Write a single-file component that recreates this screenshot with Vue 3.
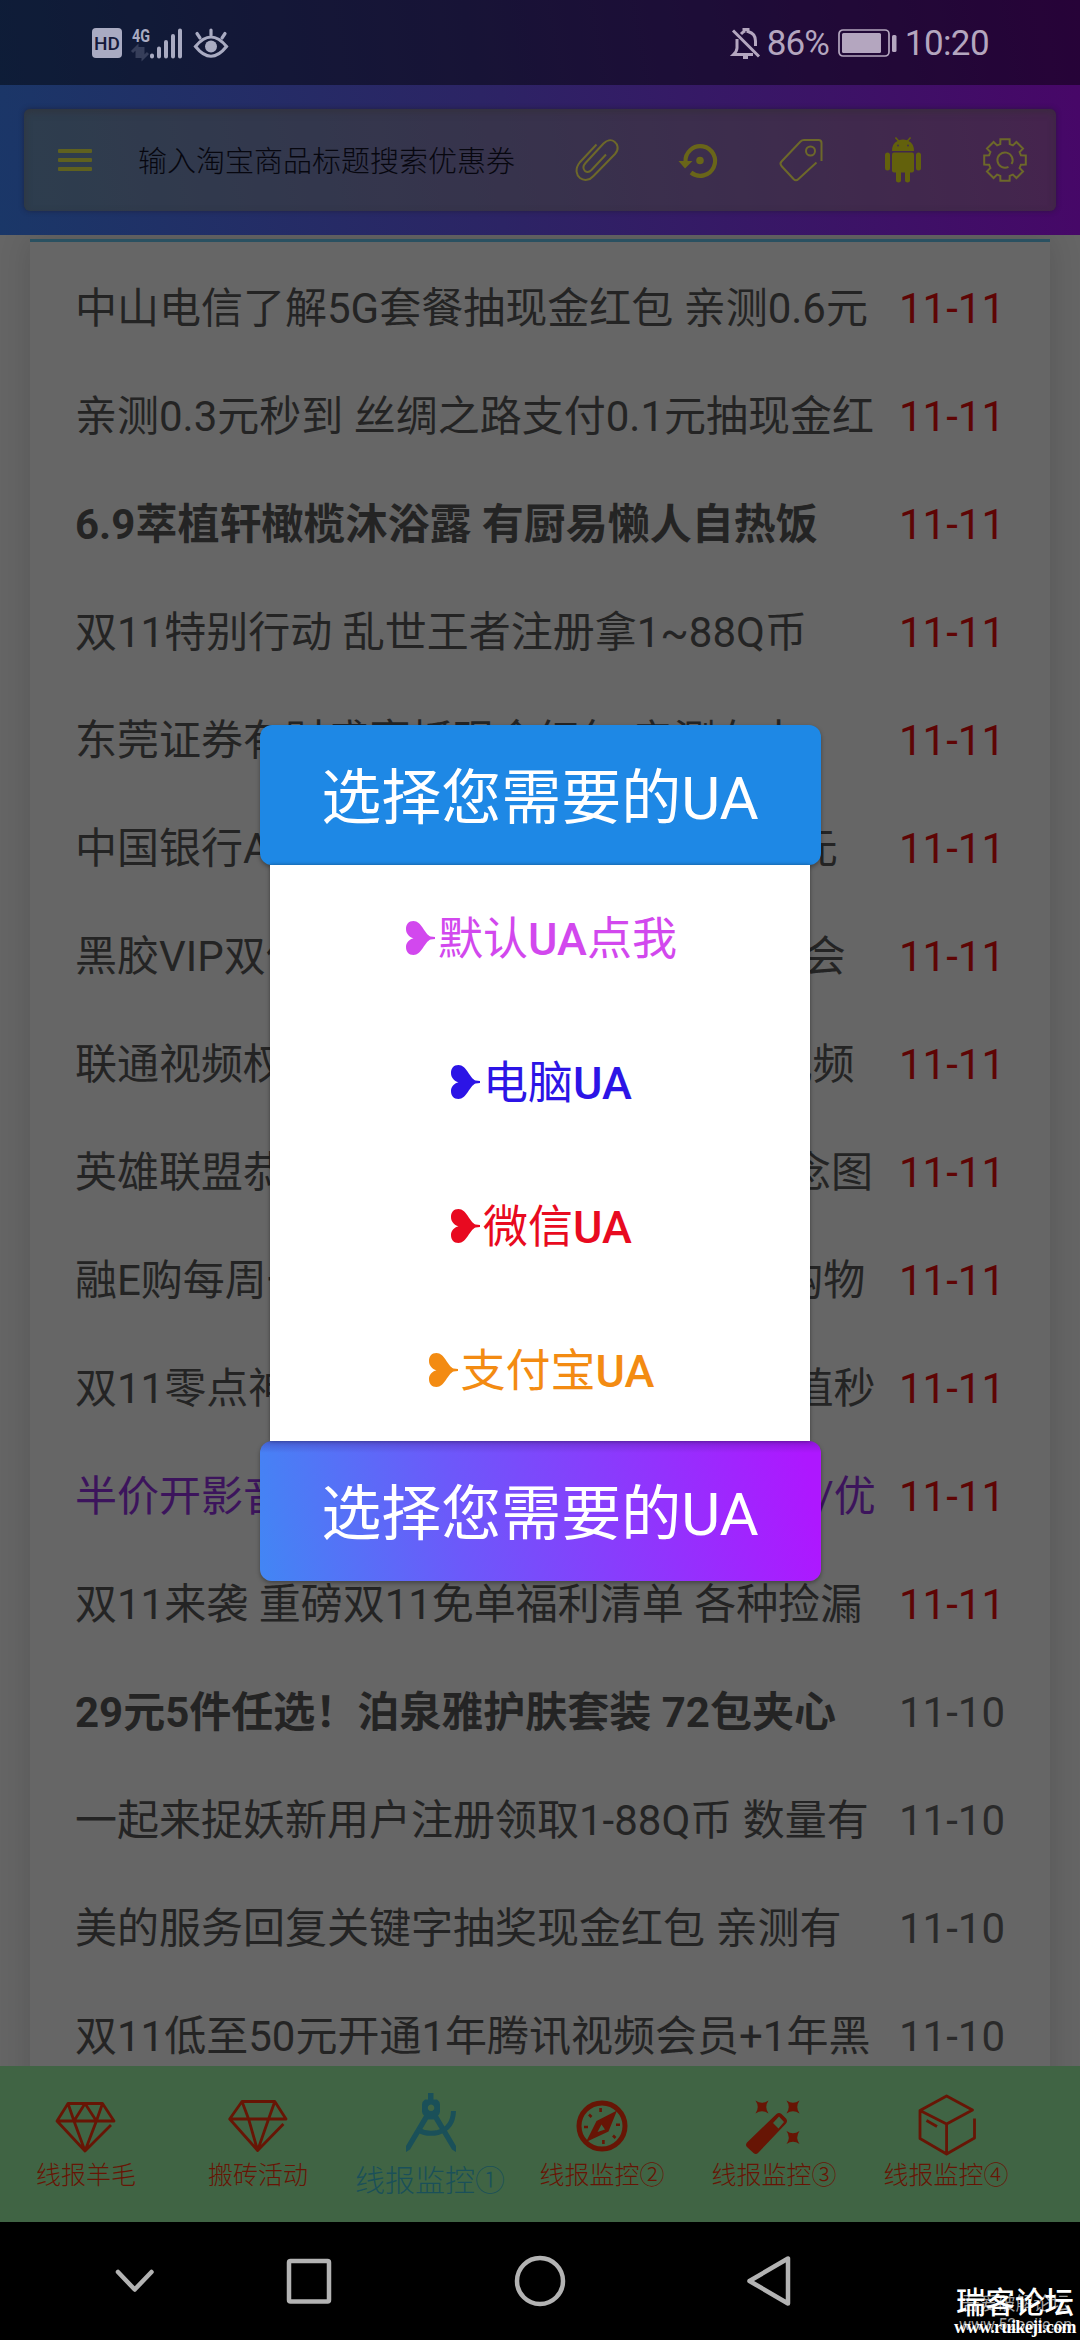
<script setup>
const RED = '11-11'
const rows = [
  { t: '中山电信了解5G套餐抽现金红包 亲测0.6元', d: RED },
  { t: '亲测0.3元秒到 丝绸之路支付0.1元抽现金红', d: RED },
  { t: '6.9萃植轩橄榄沐浴露 有厨易懒人自热饭', d: RED, kind: 'bold' },
  { t: '双11特别行动 乱世王者注册拿1~88Q币', d: RED },
  { t: '东莞证券有财盛宴抓现金红包 亲测有水', d: RED },
  { t: '中国银行APP抽奖领现金红包 亲测得五元', d: RED },
  { t: '黑胶VIP双倍快乐 开通网易云音乐1年卡会', d: RED },
  { t: '联通视频权益免费领取1个月会员腾讯视频', d: RED },
  { t: '英雄联盟恭喜夺冠登录游戏领取冠军纪念图', d: RED },
  { t: '融E购每周一抽奖赢大礼 全场电子券可购物', d: RED },
  { t: '双11零点神券 各大平台爆款100元券超值秒', d: RED },
  { t: '半价开影音会员爱奇艺/腾讯视频芒果TV/优', d: RED, kind: 'visited' },
  { t: '双11来袭 重磅双11免单福利清单 各种捡漏', d: RED },
  { t: '29元5件任选！泊泉雅护肤套装 72包夹心', d: '11-10', kind: 'bold' },
  { t: '一起来捉妖新用户注册领取1-88Q币 数量有', d: '11-10' },
  { t: '美的服务回复关键字抽奖现金红包 亲测有', d: '11-10' },
  { t: '双11低至50元开通1年腾讯视频会员+1年黑', d: '11-10' },
]

const options = [
  { a: '默认', b: '点我', c: 'pink' },
  { a: '电脑', b: '', c: 'blue' },
  { a: '微信', b: '', c: 'red' },
  { a: '支付宝', b: '', c: 'orange' },
]

// Outline of an eight-tooth cog centred on (22, 22)
const cog = (() => {
  const pts = []
  for (let i = 0; i < 8; i++) {
    const a = (i * Math.PI) / 4
    for (const [r, o] of [[16.6, -0.29], [21.3, -0.22], [21.3, 0.22], [16.6, 0.29]]) {
      pts.push(`${(22 + r * Math.sin(a + o)).toFixed(1)} ${(22 - r * Math.cos(a + o)).toFixed(1)}`)
    }
  }
  return `M${pts.join('L')}Z`
})()
</script>

<template>
  <div class="screen">
    <header class="top">
      <div class="status">
        <div class="status-left">
          <span class="hd">HD</span>
          <svg class="signal" width="54" height="34" viewBox="0 0 54 34">
            <text x="1" y="16" textLength="18" lengthAdjust="spacingAndGlyphs">4G</text>
            <path class="dim" d="M1 26l5-5v11M9 21v11M12 21v11l5-5" />
            <path class="bars" d="M21 29.500v1M28 22.500v8M35 16v14.500M42 10v20.500M49 4.500v26" />
          </svg>
          <svg class="eye" width="34" height="34" viewBox="0 0 34 34">
            <path d="M1.500 20.500Q17 1.500 32.500 20.500Q17 40 1.500 20.500Z" />
            <path d="M17 9V4M6 12L3 7.500M28 12l3-4.500" />
            <circle cx="17" cy="20.500" r="6" />
          </svg>
        </div>
        <div class="status-right">
          <svg class="bell" width="30" height="34" viewBox="0 0 30 34">
            <path d="M2 4.500l26 26M6 13v9q0 3-3.500 6.500H22M10 8q2-2 3-2.500V3.500h4v2q7.500 2 7.500 9.500v5" />
            <path d="M12 31.500h5" />
          </svg>
          <span class="pct">86%</span>
          <svg class="battery" width="60" height="28" viewBox="0 0 60 28">
            <rect x="1" y="1" width="50" height="26" rx="4" fill="none" stroke="currentColor" stroke-width="1.700" />
            <rect x="4" y="4" width="39" height="20" rx="1.500" fill="currentColor" />
            <rect x="54" y="6" width="4.500" height="17" rx="1.500" fill="currentColor" />
          </svg>
          <span class="clock">10:20</span>
        </div>
      </div>

      <div class="toolbar">
        <div class="menu"><i></i><i></i><i></i></div>
        <span class="search">输入淘宝商品标题搜索优惠券</span>
        <span class="tool">
          <svg width="44" height="44" viewBox="0 0 44 44">
            <path d="M21.500 6.500L4.700 24.500C-.5 31 1.500 37 5 40C9 43 14.500 42.500 18.500 38L40 16C44.500 11 42.500 6 39.500 3.700C36 1 31.500 2.500 28.500 5.500L10.500 25C7 29 8.500 31.500 10 33C12 34.500 14.500 34 16.500 32L31 16.500" />
          </svg>
        </span>
        <span class="tool solid">
          <svg width="44" height="44" viewBox="0 0 44 44">
            <path class="thick" d="M8.500 24A14.800 14.800 0 1 1 14 34.500" />
            <path class="fill" d="M1.500 23h14l-7.500 7.500zM23 18.700a3.800 3.800 0 1 1 0 7.600a3.800 3.800 0 1 1 0-7.600z" />
          </svg>
        </span>
        <span class="tool">
          <svg width="44" height="44" viewBox="0 0 44 44">
            <path d="M42.500 23V5Q42.500 2 39.500 2H25Q23 2 21.500 3.500L2.500 23.500Q.5 25.500 2.500 28L14.500 41Q17 43.500 19.500 41L37.500 24.500" />
            <circle cx="31.500" cy="13" r="4.500" />
          </svg>
        </span>
        <span class="tool">
          <svg class="droid" width="38" height="46" viewBox="0 0 38 46">
            <path d="M8 14Q8 6.500 13.500 4L10.800.9L12 0L15 3.200Q19 1.700 23 3.200L26 0L27.200.9L24.500 4Q30 6.500 30 14Z" />
            <rect x="8" y="15.500" width="22" height="20" rx="2" />
            <rect x="1" y="15.500" width="5" height="18" rx="2.500" />
            <rect x="32" y="15.500" width="5" height="18" rx="2.500" />
            <path d="M12 34h5v9.500q0 2-2.500 2t-2.500-2zM21 34h5v9.500q0 2-2.500 2t-2.500-2z" />
            <g class="eyes"><circle cx="14" cy="8.500" r="1" /><circle cx="24" cy="8.500" r="1" /></g>
          </svg>
        </span>
        <span class="tool">
          <svg width="44" height="44" viewBox="0 0 44 44">
            <path :d="cog" />
            <path d="M28.500 26A7.600 7.600 0 1 0 25.500 28.800" />
          </svg>
        </span>
      </div>
    </header>

    <main class="page">
      <ul class="card">
        <li v-for="r in rows" :key="r.t" class="row">
          <span class="title" :class="r.kind">{{ r.t }}</span>
          <span class="date" :class="{ recent: r.d === RED }">{{ r.d }}</span>
        </li>
      </ul>
    </main>

    <nav class="tabs">
      <div class="tab">
        <svg viewBox="0 0 64 64"><path d="M57 35L31 61L3 31L14 13.500H48.500L60 31H3M14 13.500L20 31L31 13.500L42.400 31L48.500 13.500M20 31L31 61L42.400 31" /></svg>
        <span>线报羊毛</span>
      </div>
      <div class="tab">
        <svg viewBox="0 0 64 64"><path d="M57.400 34L31.600 60.500L3.700 29L16 11.500H48.800L60 29H3.700M16 11.500L22.600 29L31.600 60.500L42.600 29L48.800 11.500" /></svg>
        <span>搬砖活动</span>
      </div>
      <div class="tab active">
        <svg viewBox="0 0 64 64">
          <path class="solid" fill-rule="evenodd" d="M30 3h5.500v6.500h3.500q3 2 3 5v7q0 2-2 4L58 56v6l-4-2.500L36 29.500h-6L12 59.500L8 62v-6L26 25.500q-2-2-2-4v-7q0-3 3-5h3zM33 14.500a3.300 3.300 0 1 0 .1 0z" />
          <path d="M33 30L56 59M33 30L10 59" stroke="none" />
          <path d="M20 40Q29 45 40 42.500Q55 38 55.500 21" stroke-width="5" />
        </svg>
        <span>线报监控①</span>
      </div>
      <div class="tab">
        <svg viewBox="0 0 64 64">
          <circle cx="32" cy="36" r="23" stroke-width="5" />
          <path class="solid" fill-rule="evenodd" d="M47 20.500L38.500 41.500L16 52L26.500 31zM31.500 34.500L27.500 42L35 39.500z" />
          <path stroke-width="2.600" d="M30.600 18v4M14 37h4M46 34.700h4M33.400 50v4M19 24.500l2.500 2.500M43 45.500l2.500 2.500" />
        </svg>
        <span>线报监控②</span>
      </div>
      <div class="tab">
        <svg viewBox="0 0 64 64">
          <path class="solid" fill-rule="evenodd" d="M34.500 24q2.500-2 5 0l4.500 4.500q2 2.500 0 5L16 63q-2 2-4.500 0L5 57q-2-2 0-4.500zM37 26.500L31 33l5.500 5.500L42 32z" />
          <path v-for="[x, y] in [[20, 17], [51, 17], [51, 47.5]]" :key="`${x}-${y}`" class="solid" :transform="`translate(${x} ${y})`" d="M-6.500-6.500Q0-2 6.500-6.500Q2 0 6.500 6.500Q0 2-6.500 6.500Q-2 0-6.500-6.500Z" />
        </svg>
        <span>线报监控③</span>
      </div>
      <div class="tab">
        <svg viewBox="0 0 64 64"><path d="M60.500 28.500V48L32.600 64L6 48.500V20.500L32.600 6L58.500 20L32.600 34L6 20.500M32.600 34V64M12.500 30.500L23 36.500" /></svg>
        <span>线报监控④</span>
      </div>
    </nav>

    <footer class="system">
      <svg width="1080" height="118" viewBox="0 0 1080 118">
        <path d="M118 50l16.700 17.500L151.500 50" />
        <rect x="289" y="39" width="40" height="40.500" rx="1.500" />
        <circle cx="540" cy="59" r="23" />
        <path d="M788 36.500V81.500L749.500 59Z" />
      </svg>
      <div class="mark under"><b>吾爱破解论坛</b><span>www.52pojie.cn</span></div>
      <div class="mark"><b>瑞客论坛</b><span>www.ruikeji.com</span></div>
    </footer>

    <section class="dialog">
      <div class="head">选择您需要的UA</div>
      <div class="body">
        <div v-for="o in options" :key="o.a" class="option" :class="o.c">
          <svg width="35" height="36" viewBox="0 0 35 36"><path d="M10.500 1C18.500 1 21.500 14 27.500 16.500L32 17v2L27.500 19.500C21.500 22 18.500 35 10.500 35C5.500 35 3 31.500 3 27C3 22.500 6 19.500 10.500 18.200C6 17 3 13.500 3 9C3 4.500 5.500 1 10.500 1Z" /></svg>
          <span>{{ o.a }}<b>UA</b>{{ o.b }}</span>
        </div>
      </div>
      <div class="head foot">选择您需要的UA</div>
    </section>
  </div>
</template>

<style>
body { margin: 0; background: #000; }
</style>

<style scoped>
.screen {
  position: relative;
  display: flex;
  flex-direction: column;
  width: 1080px;
  height: 2340px;
  overflow: hidden;
  font-family: Roboto, "Noto Sans CJK SC", sans-serif;
  white-space: nowrap;
}
svg { display: block; flex: none; overflow: visible; }

.top {
  flex: none;
  box-sizing: border-box;
  height: 235px;
  background: linear-gradient(80deg, #1a3768, #2c2465 45%, #480668);
}
.status {
  display: flex;
  justify-content: space-between;
  box-sizing: border-box;
  height: 85px;
  padding: 26px 91px 0 92px;
  background: rgba(0, 0, 0, .46);
  color: #b4a6bf;
}
.status-left { display: flex; color: #a9abc2; }
.hd {
  width: 30px;
  height: 30px;
  margin: 2px 9px 0 0;
  border-radius: 4px;
  background: #a9abc2;
  color: #151a3b;
  font: 500 19px/31px Roboto, sans-serif;
  text-align: center;
}
.signal text { font: 700 19px Roboto, sans-serif; fill: currentColor; }
.signal path { fill: none; stroke: currentColor; stroke-width: 4; stroke-linecap: round; }
.signal .dim { stroke-width: 3; stroke-linecap: butt; opacity: .25; }
.eye { margin-left: 9px; fill: none; stroke: currentColor; stroke-width: 3.200; stroke-linecap: round; }
.eye circle { fill: currentColor; stroke: none; }
.status-right { display: flex; font-size: 35px; line-height: 36px; }
.bell { fill: none; stroke: currentColor; stroke-width: 3; }
.pct { width: 72px; margin-left: 6px; letter-spacing: -1px; }
.battery { margin: 3px 0 0 -1px; }
.clock { margin-left: 7px; letter-spacing: -.6px; }

.toolbar {
  display: flex;
  align-items: center;
  box-sizing: border-box;
  height: 102px;
  margin: 24px 24px 0;
  border-radius: 6px;
  background: rgba(68, 72, 46, .45);
  box-shadow: 0 0 5px rgba(30, 25, 40, .55), inset 0 3px 7px rgba(50, 45, 50, .5);
}
.menu { display: grid; gap: 5px; width: 34px; margin: 0 46px 0 34px; }
.menu i { height: 4px; border-radius: 1px; background: #5f611f; }
.search { flex: 1; margin-top: -3px; color: #07070f; font-size: 29px; font-weight: 300; }
.tool { display: grid; place-items: center; width: 102px; color: #6d682a; }
.tool svg { fill: none; stroke: currentColor; stroke-width: 2; }
.solid { color: #696519; }
.tool .thick { stroke-width: 4.200; }
.tool .fill { fill: currentColor; stroke: none; }
.tool .droid { fill: #63610c; stroke: none; }
.eyes { fill: #413050; }

.page {
  flex: none;
  height: 1831px;
  overflow: hidden;
  padding: 0 30px;
  box-sizing: border-box;
  background: #656565;
}
.card {
  margin: 4px 0 0;
  padding: 13px 45px 0;
  height: 1860px;
  border-top: 3px solid #2a5161;
  background: #666;
  box-shadow: 0 0 30px rgba(0, 0, 0, .14);
  list-style: none;
}
.row {
  display: flex;
  justify-content: space-between;
  height: 108px;
  font-size: 42px;
  line-height: 108px;
  color: #242424;
}
.bold { font-weight: 700; }
.visited { color: #3c145c; }
.date { color: #2a2a2a; }
.recent { color: #5e0505; }

.tabs { display: flex; flex: none; height: 156px; background: #406444; }
.tab {
  display: flex;
  flex: none;
  flex-direction: column;
  align-items: center;
  width: 172px;
  padding-top: 24px;
  color: #671505;
  font-size: 25px;
  font-weight: 300;
  line-height: 30px;
}
.tab svg { width: 64px; height: 64px; fill: none; stroke: currentColor; stroke-width: 2.800; stroke-linejoin: round; }
.tab .solid { fill: currentColor; stroke: none; color: inherit; }
.tab span { margin-top: 7px; }
.active { color: #1a5059; font-size: 30px; line-height: 36px; }
.active span { margin-top: 9px; }

.system { position: relative; flex: none; height: 118px; background: #000; }
.system svg { fill: none; stroke: #b3b3b3; stroke-width: 4.500; stroke-linecap: round; stroke-linejoin: round; }
.mark {
  position: absolute;
  right: 4px;
  bottom: 5px;
  display: grid;
  justify-items: center;
  color: #fff;
  font-family: "Liberation Serif", "Noto Sans CJK SC", serif;
}
.mark b { font-weight: 500; font-size: 29.500px; line-height: 31px; }
.mark span { font-size: 18px; font-weight: 700; line-height: 16px; letter-spacing: -.6px; }
.under { right: 8px; bottom: 7px; color: #a0a0a0; font-family: Roboto, "Noto Sans CJK SC", sans-serif; }
.under b { font-size: 18px; font-weight: 400; line-height: 26px; }
.under span { font-size: 16px; font-weight: 400; letter-spacing: 0; }

.dialog {
  position: absolute;
  top: 725px;
  left: 259.500px;
  display: flex;
  flex-direction: column;
  width: 561px;
}
.head {
  box-sizing: border-box;
  height: 140px;
  padding-top: 3px;
  border-radius: 12px;
  background: #1e88e5;
  box-shadow: 0 2px 4px rgba(0, 0, 0, .35);
  color: #fff;
  font-size: 60px;
  line-height: 141px;
  text-align: center;
}
.foot {
  background: linear-gradient(rgba(60, 20, 120, .3), transparent 12px), linear-gradient(80deg, #4286f4, #6c59fa 35%, #ae17ff 97%);
}
.body { position: relative; height: 576px; margin: 0 10.500px; background: #fff; box-shadow: 0 0 4px rgba(0, 0, 0, .4); }
.option {
  display: flex;
  align-items: center;
  justify-content: center;
  height: 144px;
  font-size: 45px;
}
.option b { font-weight: 500; }
.option span { margin-top: -3px; }
.option svg { fill: currentColor; margin-top: 2px; }
.pink { color: #d248ee; }
.blue { color: #2c14e6; }
.red { color: #e80a20; }
.orange { color: #f38b12; }
</style>
